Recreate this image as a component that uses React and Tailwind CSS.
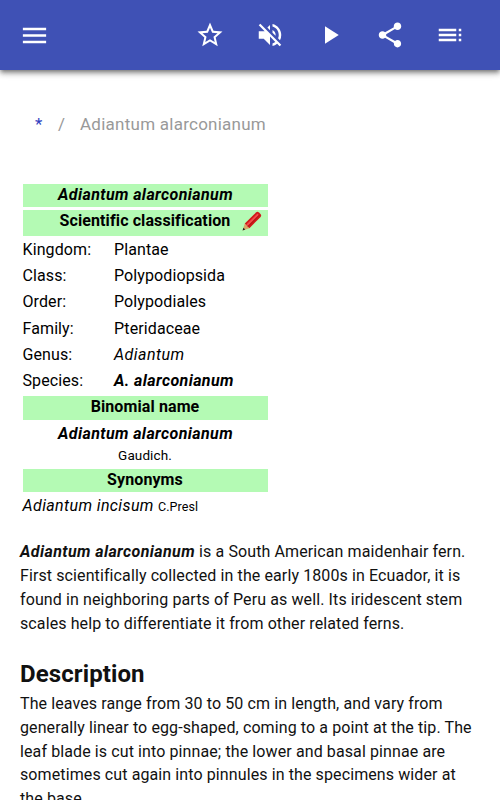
import React from 'react';
import { MdMenu, MdStarBorder, MdVolumeOff, MdPlayArrow, MdShare, MdToc } from 'react-icons/md';

const actions = [
    { label: 'Favorite', Icon: MdStarBorder },
    { label: 'Mute', Icon: MdVolumeOff },
    { label: 'Play', Icon: MdPlayArrow },
    { label: 'Share', Icon: MdShare },
    { label: 'Contents', Icon: MdToc }
];

const ranks = [
    { rank: 'Kingdom:', value: 'Plantae' },
    { rank: 'Class:', value: 'Polypodiopsida' },
    { rank: 'Order:', value: 'Polypodiales' },
    { rank: 'Family:', value: 'Pteridaceae' },
    { rank: 'Genus:', value: 'Adiantum', style: 'italic tracking-[0.45px]' },
    { rank: 'Species:', value: 'A. alarconianum', style: 'italic font-bold tracking-[0.4px]' }
];

const intro = [
    'First scientifically collected in the early 1800s in Ecuador, it is',
    'found in neighboring parts of Peru as well. Its iridescent stem',
    'scales help to differentiate it from other related ferns.'
];

const description = [
    'The leaves range from 30 to 50 cm in length, and vary from',
    'generally linear to egg-shaped, coming to a point at the tip. The',
    'leaf blade is cut into pinnae; the lower and basal pinnae are',
    'sometimes cut again into pinnules in the specimens wider at',
    'the base.'
];

const Pencil = () => (
    <svg viewBox="0 0 20 20" className="w-5 h-5">
        <path d="M.6 19.4 2.8 12.6 7.4 17.2Z" fill="#d9a566" />
        <path d="M.6 19.4 1.4 16.7 3.3 18.6Z" fill="#222" />
        <path d="M2.8 12.6 14 1.4Q15.5.3 17 1.5L18.5 3Q19.8 4.5 18.6 6L7.4 17.2Z" fill="#d01818" />
        <path d="M4.3 13.6 15.4 2.5 16.8 3.9 5.7 15Z" fill="#f24a4a" />
        <path d="M5.8 15.6 17.3 4.1" stroke="#8e1010" strokeWidth=".6" />
    </svg>
);

const AppBar = () => (
    <header className="relative h-[70px] pl-[19px] pr-5 flex items-center justify-between bg-[#3f51b5] text-white shadow-[0_2px_4px_-1px_rgba(0,0,0,0.4),0_4px_5px_rgba(0,0,0,0.24),0_1px_10px_rgba(0,0,0,0.12)]">
        <button aria-label="Menu">
            <MdMenu size={31} />
        </button>
        <div className="flex gap-[30px] pr-[15px]">
            {actions.map(({ label, Icon }) => (
                <button key={label} aria-label={label}>
                    <Icon size={30} />
                </button>
            ))}
        </div>
    </header>
);

const Infobox = () => (
    <section className="ml-[22.5px] w-[245px] text-black">
        <div className="h-[23px] mb-[3px] pl-px bg-[#b4fab4] text-center font-bold italic leading-[22px] tracking-[0.4px]">Adiantum alarconianum</div>
        <div className="relative h-[26px] mb-[1px] bg-[#b4fab4] text-center font-bold leading-[22px]">
            Scientific classification
            <span className="absolute right-[6px] top-[1px]">
                <Pencil />
            </span>
        </div>
        {ranks.map(({ rank, value, style }) => (
            <div key={rank} className="flex h-[26.2px] leading-[26px]">
                <span className="w-[91.5px]">{rank}</span>
                <span className={style}>{value}</span>
            </div>
        ))}
        <div className="h-[23.5px] mt-[2px] bg-[#b4fab4] text-center font-bold leading-[22px]">Binomial name</div>
        <div className="h-[25px] pl-px text-center font-bold italic leading-[27px] tracking-[0.4px]">Adiantum alarconianum</div>
        <div className="h-[24px] text-center text-[13.5px] leading-[20px]">Gaudich.</div>
        <div className="h-[23.5px] bg-[#b4fab4] text-center font-bold leading-[22px]">Synonyms</div>
        <div className="h-[26px] leading-[27px]">
            <i className="tracking-[0.38px]">Adiantum incisum</i> <span className="text-[12.5px]">C.Presl</span>
        </div>
    </section>
);

const App = () => (
    <div className="h-[800px] overflow-hidden bg-white font-['Roboto',sans-serif] text-base tracking-[0.105px] text-[#111]">
        <AppBar />
        <nav className="h-[114px] pt-[42px] pl-[35px] flex text-[17px] leading-6 tracking-[0.25px] text-[#999]">
            <span className="w-[23px] text-[#303fc0]">*</span>
            <span className="w-[22px]">/</span>
            <span>Adiantum alarconianum</span>
        </nav>
        <Infobox />
        <main className="ml-5 mt-[22px] leading-[23.8px] whitespace-nowrap">
            <p>
                <b className="italic tracking-[0.4px]">Adiantum alarconianum</b> is a South American maidenhair fern.
                {intro.map((line) => (
                    <span key={line} className="block">{line}</span>
                ))}
            </p>
            <h2 className="mt-[23px] mb-[2px] text-2xl font-bold leading-8">Description</h2>
            <p className="leading-[23.65px]">
                {description.map((line) => (
                    <span key={line} className="block">{line}</span>
                ))}
            </p>
        </main>
    </div>
);

export default App;
